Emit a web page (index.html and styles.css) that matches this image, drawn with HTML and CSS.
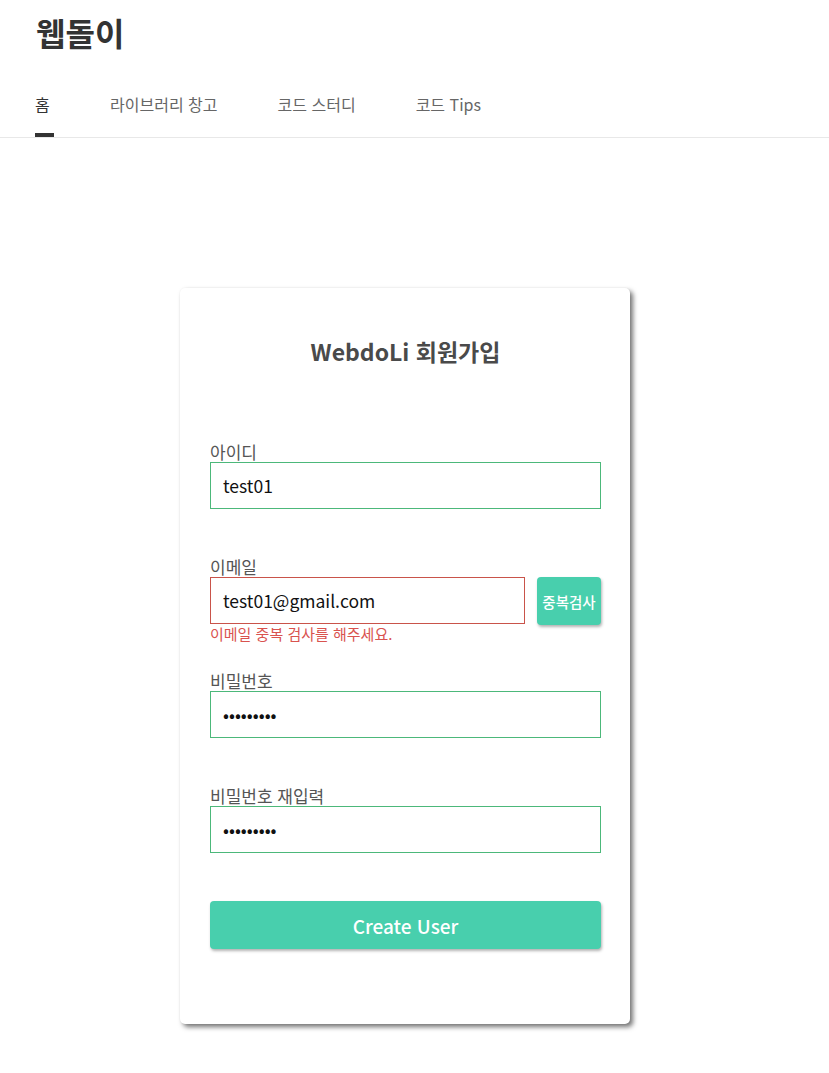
FILE: index.html
```html
<!DOCTYPE html>
<html lang="ko">
<head>
<meta charset="utf-8">
<title>웹돌이</title>
<link rel="stylesheet" href="styles.css">
</head>
<body>
<header class="site-header">
  <h1 class="brand">웹돌이</h1>
  <nav class="nav">
    <a class="nav-item active">홈</a>
    <a class="nav-item">라이브러리 창고</a>
    <a class="nav-item">코드 스터디</a>
    <a class="nav-item">코드 Tips</a>
  </nav>
</header>
<main class="main">
  <form class="card">
    <h2 class="card-title">WebdoLi 회원가입</h2>
    <div class="field">
      <label class="label">아이디</label>
      <input class="input ok" type="text" value="test01">
      <div class="helper"></div>
    </div>
    <div class="field field-tight">
      <label class="label">이메일</label>
      <div class="row">
        <input class="input error" type="text" value="test01@gmail.com">
        <button class="check-btn" type="button">중복검사</button>
      </div>
      <div class="helper err-text">이메일 중복 검사를 해주세요.</div>
    </div>
    <div class="field">
      <label class="label">비밀번호</label>
      <input class="input ok" type="password" value="password1">
      <div class="helper"></div>
    </div>
    <div class="field">
      <label class="label">비밀번호 재입력</label>
      <input class="input ok" type="password" value="password1">
      <div class="helper"></div>
    </div>
    <button class="submit-btn" type="button">Create User</button>
  </form>
</main>
</body>
</html>
```

FILE: styles.css
```css
* { box-sizing: border-box; }
html, body { margin: 0; padding: 0; background: #fff; }
body {
  font-family: "Noto Sans CJK KR", "Noto Sans", sans-serif;
  color: #333;
}
.site-header {
  border-bottom: 1px solid #e8e8e8;
}
.brand {
  margin: 0;
  padding: 12px 0 0 36px;
  font-size: 32px;
  line-height: 40px;
  font-weight: 700;
  color: #333;
}
.nav {
  display: flex;
  gap: 60px;
  padding: 41px 0 0 35px;
}
.nav-item {
  display: flex;
  flex-direction: column;
  align-items: flex-start;
  font-size: 16px;
  line-height: 22px;
  color: #666;
  text-decoration: none;
  padding-bottom: 22px;
}
.nav-item.active {
  color: #333;
  padding-bottom: 0;
}
.nav-item.active::after {
  content: "";
  display: block;
  width: 19px;
  height: 4px;
  margin-top: 18px;
  margin-right: -4px;
  background: #333;
}
.main {
  padding: 150px 0 40px 180px;
}
.card {
  width: 450px;
  background: #fff;
  border-radius: 5px;
  box-shadow: 3px 3px 5px rgba(0,0,0,0.55), 0 0 2px rgba(0,0,0,0.06);
  padding: 48px 29px 75px 30px;
  display: flex;
  flex-direction: column;
}
.card-title {
  margin: 0 0 76px;
  text-align: center;
  font-size: 23px;
  line-height: 30px;
  font-weight: 700;
  color: #4a4a4a;
}
.field {
  display: flex;
  flex-direction: column;
  margin-bottom: 28px;
}
.field-tight {
  margin-bottom: 27px;
}
.label {
  font-size: 17px;
  line-height: 20px;
  color: #555;
}
.row {
  display: flex;
  gap: 12px;
  align-items: flex-start;
  height: 47px;
}
.input {
  width: 100%;
  height: 47px;
  padding: 0 12px;
  font-family: "Noto Sans CJK KR", "Noto Sans", sans-serif;
  font-size: 17.5px;
  color: #111;
  background: #fff;
  border: 1px solid #4cb87a;
  border-radius: 0;
  outline: none;
}
.input.error {
  border-color: #c9534a;
  flex: 1;
}
.check-btn {
  flex: 0 0 64px;
  height: 48px;
  border: none;
  border-radius: 4px;
  background: #48cfad;
  color: #fff;
  font-family: "Noto Sans CJK KR", sans-serif;
  font-size: 14.5px;
  font-weight: 500;
  padding: 0;
  box-shadow: 1px 2px 3px rgba(0,0,0,0.3);
}
.helper {
  height: 20px;
  font-size: 15px;
  line-height: 20px;
}
.err-text {
  color: #d9534f;
}
.submit-btn {
  height: 48px;
  border: none;
  border-radius: 4px;
  background: #48cfad;
  color: #fff;
  font-family: "Noto Sans CJK KR", sans-serif;
  font-size: 19px;
  font-weight: 500;
  box-shadow: 1px 2px 3px rgba(0,0,0,0.3);
}
```
